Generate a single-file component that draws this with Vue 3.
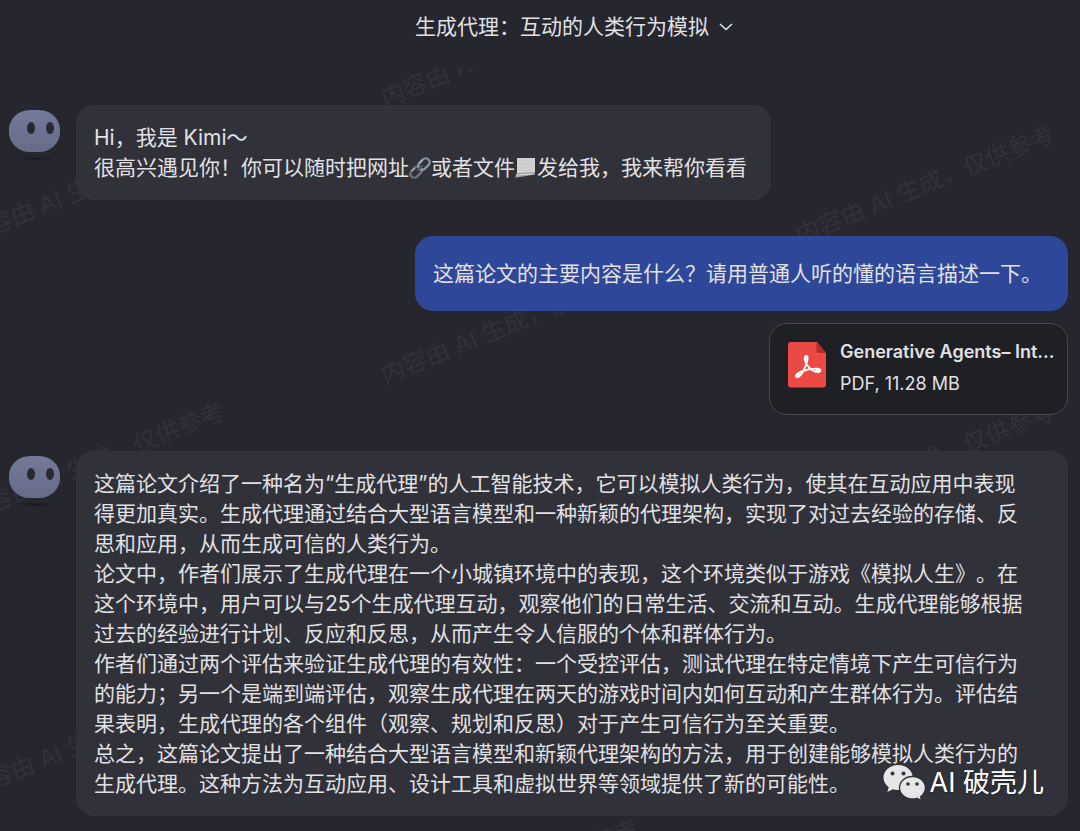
<script setup>
const title = '生成代理：互动的人类行为模拟'

const question = '这篇论文的主要内容是什么？请用普通人听的懂的语言描述一下。'

const answer = [
  '这篇论文介绍了一种名为“生成代理”的人工智能技术，它可以模拟人类行为，使其在互动应用中表现得更加真实。生成代理通过结合大型语言模型和一种新颖的代理架构，实现了对过去经验的存储、反思和应用，从而生成可信的人类行为。',
  '论文中，作者们展示了生成代理在一个小城镇环境中的表现，这个环境类似于游戏《模拟人生》。在这个环境中，用户可以与25个生成代理互动，观察他们的日常生活、交流和互动。生成代理能够根据过去的经验进行计划、反应和反思，从而产生令人信服的个体和群体行为。',
  '作者们通过两个评估来验证生成代理的有效性：一个受控评估，测试代理在特定情境下产生可信行为的能力；另一个是端到端评估，观察生成代理在两天的游戏时间内如何互动和产生群体行为。评估结果表明，生成代理的各个组件（观察、规划和反思）对于产生可信行为至关重要。',
  '总之，这篇论文提出了一种结合大型语言模型和新颖代理架构的方法，用于创建能够模拟人类行为的生成代理。这种方法为互动应用、设计工具和虚拟世界等领域提供了新的可能性。',
]

// Staggered grid of the background notice
const marks = []
for (let col = 0; col < 3; col++) {
  for (let row = 0; row < 4; row++) {
    marks.push({ x: -30 + col * 415, y: (col % 2 ? 107 : 244) + (row - (col % 2 ? 0 : 0)) * 277 })
  }
}
</script>

<template>
  <div class="page">
    <svg class="marks" aria-hidden="true">
      <text
        v-for="(m, i) in marks"
        :key="i"
        :transform="`translate(${m.x} ${m.y}) rotate(-22)`"
      >内容由 AI 生成，仅供参考</text>
    </svg>

    <header class="header">
      <button class="title" type="button">
        <span>{{ title }}</span>
        <svg width="14" height="10" viewBox="0 0 14 10" aria-hidden="true">
          <path d="M1 2l6 5.5L13 2" fill="none" stroke="#e3e3e6" stroke-width="1.6" />
        </svg>
      </button>
    </header>

    <main class="chat">
      <section class="row">
        <div class="avatar"><i class="eye"></i><i class="eye"></i></div>
        <div class="bubble">
          <p>Hi，我是 Kimi～</p>
          <p>
            很高兴遇见你！你可以随时把网址<svg class="emoji" viewBox="0 0 22 22" aria-hidden="true">
              <g fill="none" transform="rotate(-45 11 11)">
                <rect x="-1" y="7" width="13" height="8" rx="4" stroke="#697482" stroke-width="2.4" />
                <rect x="10" y="7" width="13" height="8" rx="4" stroke="#8495a5" stroke-width="2.4" />
                <path d="M7 7.5h-4M14 7h5" stroke="#c3ccd5" stroke-width="1" />
                <path d="M7 11h8" stroke="#4c535e" stroke-width="2" />
              </g>
            </svg>或者文件<svg class="emoji" viewBox="0 0 22 22" aria-hidden="true">
              <path d="M2 1h18v16l-18 1z" fill="#d2d2d2" />
              <path d="M4 4h13M4 7h13M4 10h13M4 13h12" stroke="#c8c8c8" />
              <path d="M2 16l18-1v2.500L2 20.500H0z" fill="#a2a2a0" />
              <path d="M1 18l17-1" stroke="#dadad6" />
            </svg>发给我，我来帮你看看
          </p>
        </div>
      </section>

      <section class="mine">
        <p class="question">{{ question }}</p>
        <a class="file" href="#">
          <svg width="38" height="46" viewBox="0 0 38 46" aria-hidden="true">
            <path d="M3 0h26l9 11v31.5a3 3 0 0 1-3 3H3a3 3 0 0 1-3-3V3a3 3 0 0 1 3-3z" fill="#ea4944" />
            <path d="M28.5 0L38 11h-7.500a2 2 0 0 1-2-2z" fill="#b82b2a" />
            <g fill="none" stroke="#fff" stroke-width="1.9" stroke-linejoin="round">
              <path d="M18.500 14c-3 0-2 5.500 1 9.500 3 4 7.500 7 11 6.500 3-.5 2.500-3-1-3.300-5-.4-11 .8-16 2.800-4.500 1.800-6.500 4.200-5 5.500 2 1.300 5-2.500 7.300-7 2.600-5 5.400-14 2.700-14z" />
              <path d="M18.600 15.500v3M28 28.500h2.500M9 34l2-1.800" stroke-width="2.6" stroke-linecap="round" />
            </g>
          </svg>
          <span class="info">
            <strong>Generative Agents– Int...</strong>
            <span>PDF, 11.28 MB</span>
          </span>
        </a>
      </section>

      <section class="row">
        <div class="avatar"><i class="eye"></i><i class="eye"></i></div>
        <div class="bubble long">
          <p v-for="(p, i) in answer" :key="i">{{ p }}</p>
          <div class="brand">
            <svg width="43" height="38" viewBox="0 0 43 38" aria-hidden="true">
              <path d="M15 1C6.800 1 .5 6.600.5 13.600c0 4 2 7.400 5.300 9.700L4.300 28l5.400-2.800c1.700.5 3.400.8 5.300.8 8.200 0 14.700-5.500 14.700-12.500S23.200 1 15 1z" fill="#e6e6e6" />
              <path d="M29.500 12.500c-7.300 0-13 5-13 11.300s5.700 11.200 13 11.200c1.600 0 3.200-.3 4.600-.7l4.600 2.500-1.200-4.100c3-2.100 4.900-5.200 4.900-8.900 0-6.300-5.700-11.300-12.900-11.300z" fill="#e6e6e6" stroke="#31313a" stroke-width="1.3" />
              <g fill="#31313a">
                <circle cx="9.500" cy="9.500" r="2" /><circle cx="20.500" cy="9.500" r="2" />
                <circle cx="25" cy="20" r="1.800" /><circle cx="34" cy="20" r="1.800" />
              </g>
            </svg>
            <span>AI 破壳儿</span>
          </div>
        </div>
      </section>
    </main>
  </div>
</template>

<style>
body {
  margin: 0;
  background: #26262f;
}
</style>

<style scoped>
.page {
  position: relative;
  box-sizing: border-box;
  min-height: 100vh;
  overflow: hidden;
  background: #26262f;
  color: #e1e1e4;
  font-family: Inter, "Noto Sans CJK SC", sans-serif;
  font-size: 21px;
  line-height: 30px;
  text-spacing-trim: space-all;
}

.marks {
  position: absolute;
  inset: 0;
  width: 100%;
  height: 100%;
  fill: #31313a;
  font-size: 24px;
}

.header {
  position: relative;
  box-sizing: border-box;
  height: 69px;
  padding: 12px 0 0 68px;
  background: #26262f;
  text-align: center;
}

.title {
  display: inline-flex;
  align-items: center;
  gap: 10px;
  padding: 0;
  border: 0;
  background: none;
  color: inherit;
  font: inherit;
}

.chat {
  position: relative;
  display: flex;
  flex-direction: column;
  gap: 36px;
  padding: 36px 12px 14px 9px;
}

.row {
  display: flex;
  align-items: flex-start;
  gap: 16px;
}

.avatar {
  position: relative;
  flex: none;
  box-sizing: border-box;
  display: flex;
  gap: 11px;
  width: 51px;
  height: 42px;
  margin-top: 5px;
  padding: 12px 0 0 18px;
  border-radius: 21px / 20px;
  background: linear-gradient(#737998, #666b88);
}

.avatar::after {
  content: "";
  position: absolute;
  left: 7px;
  top: 46px;
  width: 38px;
  height: 5px;
  border-radius: 50%;
  background: radial-gradient(closest-side, #18181d, #26262f);
}

.eye {
  width: 8px;
  height: 12px;
  border-radius: 50%;
  background: #292933;
}

.bubble {
  padding: 18px 24px 17px 18px;
  border-radius: 18px;
  background: #31313a;
}

.long {
  position: relative;
  flex: 1;
  padding-right: 36px;
}

p {
  margin: 0;
}

.emoji {
  width: 22px;
  height: 22px;
  vertical-align: -4px;
}

.mine {
  display: flex;
  flex-direction: column;
  align-items: flex-end;
  gap: 12px;
}

.question {
  padding: 23px 26px 22px 18px;
  border-radius: 18px;
  background: #2e4799;
}

.file {
  box-sizing: border-box;
  display: flex;
  gap: 14px;
  width: 299px;
  height: 92px;
  padding: 18px 12px 0 18px;
  border: 1px solid #46474b;
  border-radius: 18px;
  background: #1f2024;
  color: #e1e1e4;
  text-decoration: none;
}

.info {
  display: flex;
  flex-direction: column;
  gap: 8px;
  margin-top: -2px;
  font-size: 18px;
  line-height: 24px;
  white-space: nowrap;
}

.info strong {
  font-weight: 600;
}

.brand {
  position: absolute;
  right: 24px;
  bottom: 14px;
  display: flex;
  align-items: center;
  gap: 4px;
  color: #fff;
  font-size: 27px;
  line-height: 38px;
  text-shadow: 1px 1px 1px #222228;
}
</style>
